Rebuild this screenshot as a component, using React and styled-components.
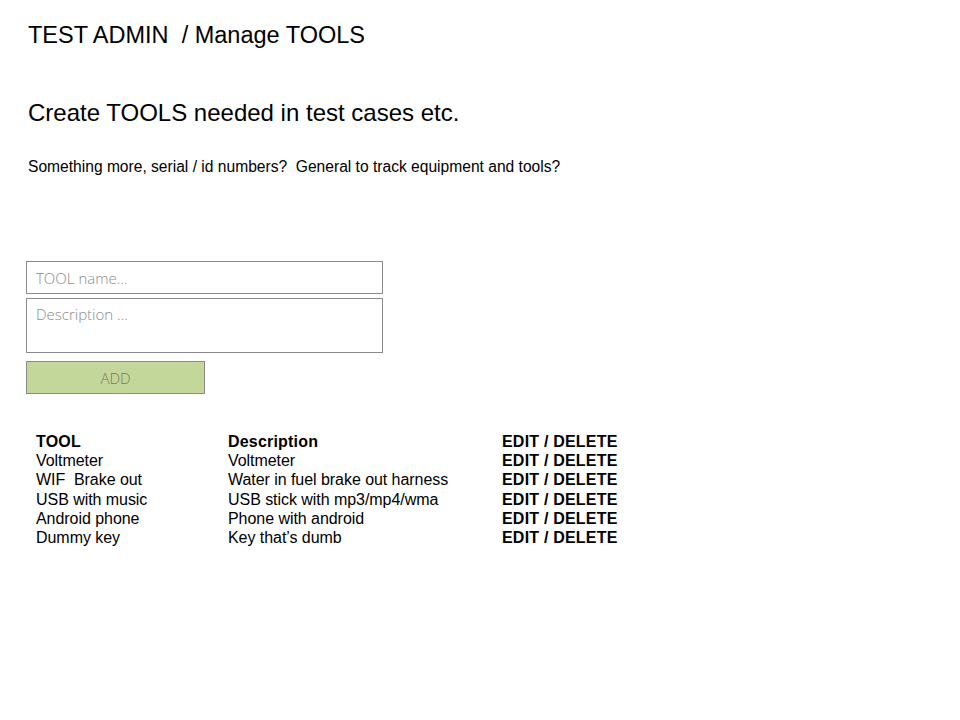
import React from 'react';
import styled, { createGlobalStyle } from 'styled-components';

const GlobalStyle = createGlobalStyle`
    body {
        margin: 0;
        background: #fff;
        font-family: "Liberation Sans", Arial, sans-serif;
        color: #000;
    }
`

const tools = [
    { name: 'Voltmeter', desc: 'Voltmeter' },
    { name: 'WIF  Brake out', desc: 'Water in fuel brake out harness' },
    { name: 'USB with music', desc: 'USB stick with mp3/mp4/wma' },
    { name: 'Android phone', desc: 'Phone with android' },
    { name: 'Dummy key', desc: 'Key that\u2019s dumb' },
];

const App = () => {
    return (
        <Page>
            <GlobalStyle />
            <Breadcrumb>TEST ADMIN  / Manage TOOLS</Breadcrumb>
            <Heading>Create TOOLS needed in test cases etc.</Heading>
            <Note>Something more, serial / id numbers?  General to track equipment and tools?</Note>
            <Form>
                <NameInput placeholder="TOOL name..." />
                <DescInput placeholder="Description ..." />
                <AddButton>ADD</AddButton>
            </Form>
            <Table>
                <Cell bold>TOOL</Cell>
                <Cell bold>Description</Cell>
                <Cell bold>EDIT / DELETE</Cell>
                { tools.map((tool, index) => (
                    <React.Fragment key={index}>
                        <Cell>{tool.name}</Cell>
                        <Cell>{tool.desc}</Cell>
                        <Cell bold>EDIT / DELETE</Cell>
                    </React.Fragment>
                )) }
            </Table>
        </Page>
    )
}

export default App;

const Page = styled.div`
    width: 960px;
    height: 720px;
    padding: 21px 0 0 28px;
    box-sizing: border-box;
`

const Breadcrumb = styled.div`
    font-size: 23.5px;
    line-height: 28px;
    white-space: pre;
`

const Heading = styled.div`
    margin-top: 50px;
    font-size: 24px;
    line-height: 28px;
`

const Note = styled.div`
    margin-top: 31px;
    font-size: 15.6px;
    line-height: 18px;
    white-space: pre;
`

const Form = styled.div`
    margin-top: 85px;
    margin-left: -2px;
    display: flex;
    flex-direction: column;
    align-items: flex-start;
    gap: 4px;
`

const fieldStyle = `
    width: 357px;
    box-sizing: border-box;
    border: 1px solid #8a8a8a;
    background: #fff;
    padding: 6px 9px;
    font-family: "Open Sans", sans-serif;
    font-weight: 300;
    font-size: 15px;
    color: #333;
    outline: none;
    &::placeholder {
        color: #8c8c8c;
    }
`

const NameInput = styled.input`
    ${fieldStyle}
    height: 33px;
`

const DescInput = styled.textarea`
    ${fieldStyle}
    height: 55px;
    resize: none;
    padding-top: 5px;
`

const AddButton = styled.button`
    margin-top: 4px;
    width: 179px;
    height: 33px;
    background: #c4d79b;
    border: 1px solid #8a8a8a;
    font-family: "Open Sans", sans-serif;
    font-weight: 300;
    font-size: 15px;
    color: #727a68;
`

const Table = styled.div`
    margin-top: 38px;
    margin-left: 8px;
    display: grid;
    grid-template-columns: 192px 274px max-content;
`

const Cell = styled.div`
    font-size: 16px;
    line-height: 19.2px;
    font-weight: ${props => props.bold ? 700 : 400};
    letter-spacing: ${props => props.bold ? '0.2px' : '-0.05px'};
    white-space: pre;
`
